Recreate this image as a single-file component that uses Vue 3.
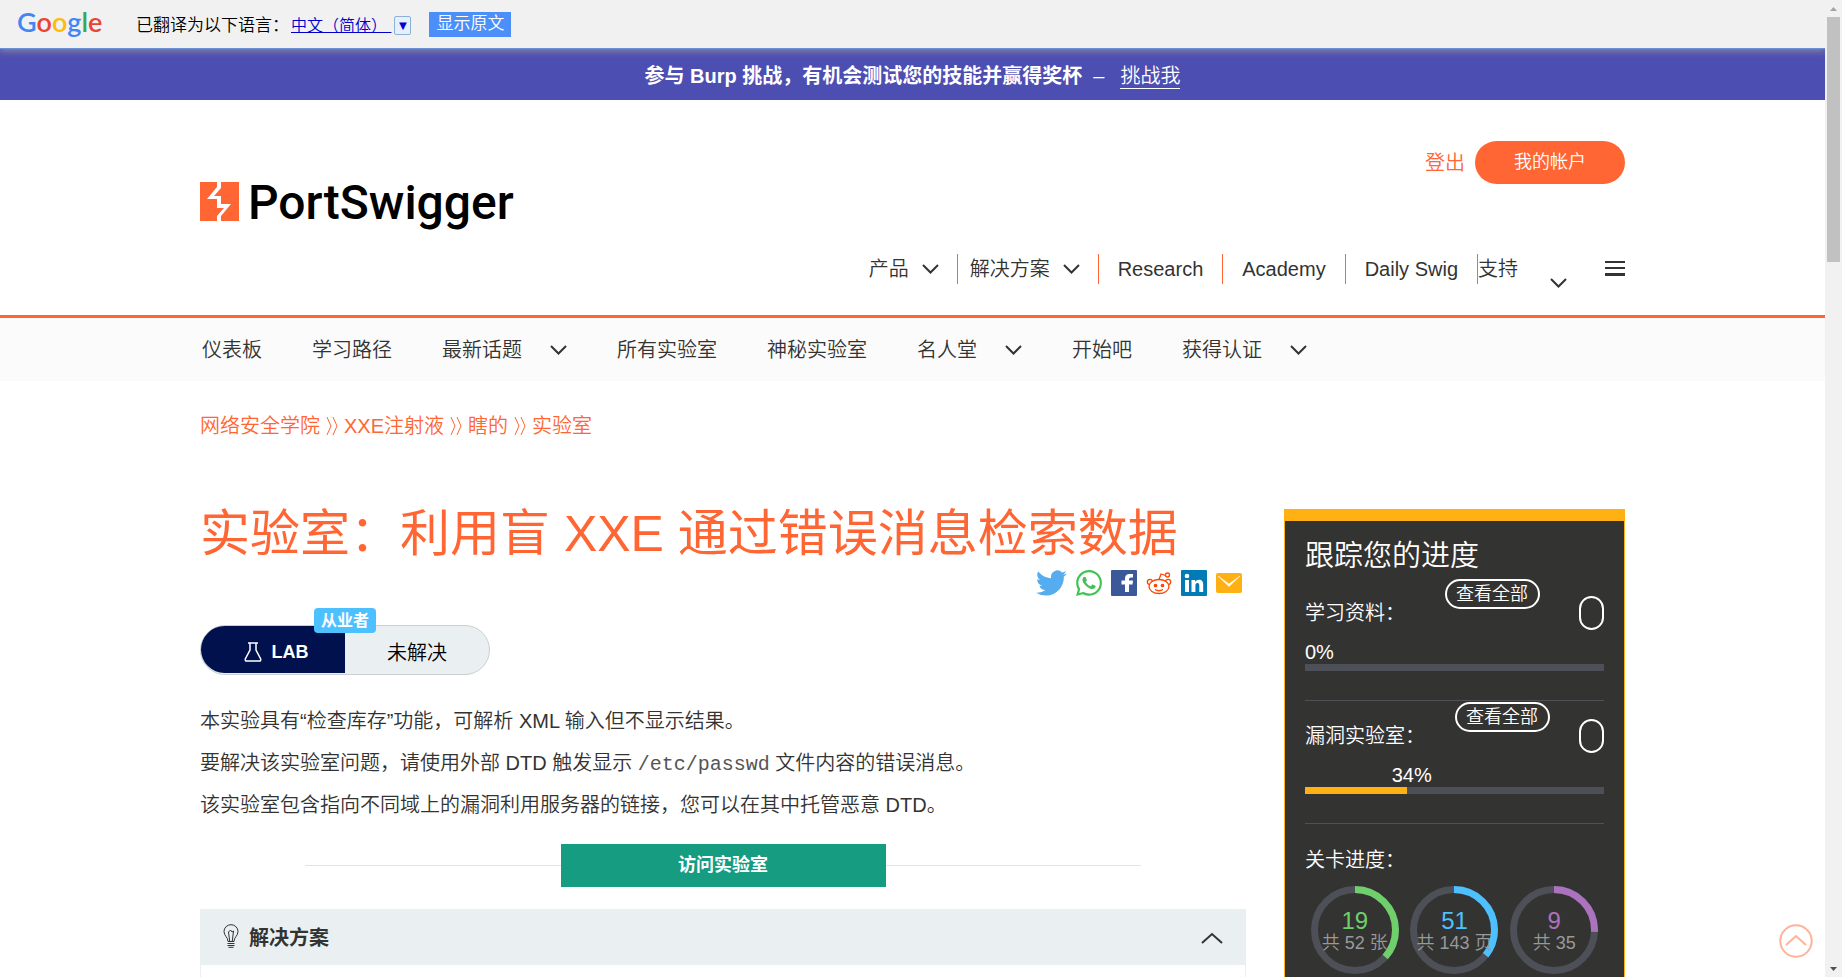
<script setup>
const mainNav = [
  { label: '产品', menu: true },
  { label: '解决方案', menu: true },
  { label: 'Research' },
  { label: 'Academy' },
  { label: 'Daily Swig' }
]

const subNav = [
  { label: '仪表板' },
  { label: '学习路径' },
  { label: '最新话题', menu: true },
  { label: '所有实验室' },
  { label: '神秘实验室' },
  { label: '名人堂', menu: true },
  { label: '开始吧' },
  { label: '获得认证', menu: true }
]

const crumbs = ['网络安全学院', 'XXE注射液', '瞎的', '实验室']

const tracks = [
  { label: '学习资料：', percent: 0 },
  { label: '漏洞实验室：', percent: 34 }
]

const levels = [
  { done: 19, total: 52, note: '共 52 张', tone: 'green' },
  { done: 51, total: 143, note: '共 143 页', tone: 'blue' },
  { done: 9, total: 35, note: '共 35', tone: 'purple' }
]

const circumference = 2 * Math.PI * 40.5
const arc = (level) => `${(level.done / level.total) * circumference} ${circumference}`
</script>

<template>
  <div class="shell">
    <div class="page">
      <div class="translate-bar">
        <span class="google"><span class="g-blue">G</span><span class="g-red">o</span><span class="g-yellow">o</span><span class="g-blue">g</span><span class="g-green">l</span><span class="g-red">e</span></span>
        <span class="translated">已翻译为以下语言：</span>
        <a class="language" href="#"><span class="language-name">中文（简体）&nbsp;</span><span class="language-arrow">▼</span></a>
        <button class="show-original" type="button">显示原文</button>
      </div>

      <div class="banner">
        <strong>参与 Burp 挑战，有机会测试您的技能并赢得奖杯</strong>
        <span class="dash">–</span>
        <a href="#">挑战我</a>
      </div>

      <header class="header">
        <div class="container header-inner">
          <a class="logo" href="#" aria-label="PortSwigger">
            <svg class="logo-mark" viewBox="0 0 39 39">
              <path fill="#ff6633" d="M0 0H17V5L7 17H17V26H24L17 34V39H0Z" />
              <path fill="#ff6633" d="M21 0H39V39H21V34L31 22H21V14H14L21 6Z" />
            </svg>
            <span class="logo-text">PortSwigger</span>
          </a>
          <div class="header-side">
            <div class="account">
              <a class="logout" href="#">登出</a>
              <a class="my-account" href="#">我的帐户</a>
            </div>
            <nav class="main-nav">
              <a v-for="item in mainNav" :key="item.label" class="main-item" :class="{ 'has-menu': item.menu }" href="#">
                <span>{{ item.label }}</span>
                <svg v-if="item.menu" class="chevron" viewBox="0 0 17 10"><path d="M1 1L8.500 8.500L16 1" /></svg>
              </a>
              <a class="main-item support" href="#">支持</a>
              <svg class="chevron low" viewBox="0 0 17 10"><path d="M1 1L8.500 8.500L16 1" /></svg>
              <button class="burger" type="button" aria-label="菜单"><i></i><i></i><i></i></button>
            </nav>
          </div>
        </div>
      </header>

      <nav class="sub-nav">
        <div class="container sub-inner">
          <a v-for="item in subNav" :key="item.label" class="sub-item" href="#">
            <span>{{ item.label }}</span>
            <svg v-if="item.menu" class="chevron" viewBox="0 0 17 10"><path d="M1 1L8.500 8.500L16 1" /></svg>
          </a>
        </div>
      </nav>

      <div class="container">
        <nav class="crumbs">
          <template v-for="(crumb, i) in crumbs" :key="crumb">
            <svg v-if="i" viewBox="0 0 12 20"><path d="M1 1L5 10L1 19M7 1L11 10L7 19" /></svg>
            <a href="#">{{ crumb }}</a>
          </template>
        </nav>

        <div class="columns">
          <main class="lab">
            <h1>实验室：利用盲 XXE 通过错误消息检索数据</h1>

            <div class="social">
              <a class="wide" href="#" aria-label="Twitter">
                <svg viewBox="0 2 24 20"><path fill="#55acee" d="M23.953 4.57a10 10 0 01-2.825.775 4.958 4.958 0 002.163-2.723c-.951.555-2.005.959-3.127 1.184a4.92 4.92 0 00-8.384 4.482C7.69 8.095 4.067 6.13 1.64 3.162a4.822 4.822 0 00-.666 2.475c0 1.71.87 3.213 2.188 4.096a4.904 4.904 0 01-2.228-.616v.06a4.923 4.923 0 003.946 4.827 4.996 4.996 0 01-2.212.085 4.936 4.936 0 004.604 3.417 9.867 9.867 0 01-6.102 2.105c-.39 0-.779-.023-1.17-.067a13.995 13.995 0 007.557 2.209c9.053 0 13.998-7.496 13.998-13.985 0-.21 0-.42-.015-.63A9.935 9.935 0 0024 4.59z" /></svg>
              </a>
              <a href="#" aria-label="WhatsApp">
                <svg viewBox="0 0 24 24"><path fill="#43c353" d="M17.472 14.382c-.297-.149-1.758-.867-2.03-.967-.273-.099-.471-.148-.67.15-.197.297-.767.966-.94 1.164-.173.199-.347.223-.644.075-.297-.15-1.255-.463-2.39-1.475-.883-.788-1.48-1.761-1.653-2.059-.173-.297-.018-.458.13-.606.134-.133.298-.347.446-.52.149-.174.198-.298.298-.497.099-.198.05-.371-.025-.52-.075-.149-.669-1.612-.916-2.207-.242-.579-.487-.5-.669-.51-.173-.008-.371-.01-.57-.01-.198 0-.52.074-.792.372-.272.297-1.04 1.016-1.04 2.479 0 1.462 1.065 2.875 1.213 3.074.149.198 2.096 3.2 5.077 4.487.709.306 1.262.489 1.694.625.712.227 1.36.195 1.871.118.571-.085 1.758-.719 2.006-1.413.248-.694.248-1.289.173-1.413-.074-.124-.272-.198-.57-.347m-5.421 7.403h-.004a9.87 9.87 0 01-5.031-1.378l-.361-.214-3.741.982.998-3.648-.235-.374a9.86 9.86 0 01-1.51-5.26c.001-5.45 4.436-9.884 9.888-9.884 2.64 0 5.122 1.03 6.988 2.898a9.825 9.825 0 012.893 6.994c-.003 5.45-4.437 9.884-9.885 9.884m8.413-18.297A11.815 11.815 0 0012.05 0C5.495 0 .16 5.335.157 11.892c0 2.096.547 4.142 1.588 5.945L.057 24l6.305-1.654a11.882 11.882 0 005.683 1.448h.005c6.554 0 11.89-5.335 11.893-11.893a11.821 11.821 0 00-3.48-8.413z" /></svg>
              </a>
              <a href="#" aria-label="Facebook">
                <svg viewBox="0 0 26 26"><rect width="26" height="26" rx="1" fill="#3b5998" /><path fill="#fff" d="M14 22V14.500H10.500V10.500H14V8.500Q14 4 18.500 4H22V7.500H20Q18 7.500 18 9V10.500H22L21.500 14.500H18V22Z" /></svg>
              </a>
              <a href="#" aria-label="Reddit">
                <svg viewBox="0 0 26 26" fill="none" stroke="#ff4500" stroke-width="1.300">
                  <ellipse cx="13" cy="16.500" rx="10" ry="7" />
                  <path d="M3.500 14.500A2.600 2.600 0 1 1 6.500 11.500M19.500 11.500A2.600 2.600 0 1 1 22.500 14.500M13 9.500L15 4L19.500 5.500" />
                  <circle cx="21.500" cy="5" r="2" />
                  <path d="M9 19.500Q13 22 17 19.500" />
                  <circle cx="9.500" cy="15.500" r="1.200" fill="#ff4500" /><circle cx="16.500" cy="15.500" r="1.200" fill="#ff4500" />
                </svg>
              </a>
              <a href="#" aria-label="LinkedIn">
                <svg viewBox="0 0 26 26"><rect width="26" height="26" rx="1" fill="#007bb6" /><path fill="#fff" d="M4 10H8V22H4ZM10.500 10H14.200V11.700Q15.400 9.700 18 9.700C21.700 9.700 22.200 12.400 22.200 15.300V22H18.300V16C18.300 14.500 18.200 13 16.400 13C14.600 13 14.400 14.500 14.400 16V22H10.500Z" /><circle cx="6" cy="6" r="2.300" fill="#fff" /></svg>
              </a>
              <a href="#" aria-label="Email">
                <svg viewBox="0 0 26 26"><rect y="3" width="26" height="20" rx="2" fill="#ffb012" /><path fill="#fff" d="M2 6L13 14L24 6L13 16.500Z" stroke="#fff" stroke-width=".5" /></svg>
              </a>
            </div>

            <div class="status">
              <span class="status-lab">
                <svg viewBox="0 0 18 20"><path d="M4 1H14M6 1V8L1.300 17Q1 19 2.500 19H15.500Q17 19 16.700 17L12 8V1" /></svg>
                LAB
              </span>
              <span class="status-text">未解决</span>
              <span class="level-tag">从业者</span>
            </div>

            <div class="description">
              <p>本实验具有“检查库存”功能，可解析 XML 输入但不显示结果。</p>
              <p>要解决该实验室问题，请使用外部 DTD 触发显示 <code>/etc/passwd</code> 文件内容的错误消息。</p>
              <p>该实验室包含指向不同域上的漏洞利用服务器的链接，您可以在其中托管恶意 DTD。</p>
            </div>

            <div class="launch">
              <a href="#">访问实验室</a>
            </div>

            <section class="solution">
              <button class="solution-head" type="button">
                <svg class="bulb" viewBox="0 0 16 24">
                  <path d="M5 17.500C5 13 1 12 1 7.500A7 6.800 0 0 1 15 7.500C15 12 11 13 11 17.500ZM6.700 17L5.500 8L7.500 6L9 8L10.500 7L9.300 17M4.500 19.500H11.500M4.500 21.500H11.500M5.500 23.300H10.500" />
                </svg>
                <span>解决方案</span>
                <svg class="fold" viewBox="0 0 22 12"><path d="M1 11L11 2L21 11" /></svg>
              </button>
              <div class="solution-body"></div>
            </section>
          </main>

          <aside class="progress">
            <h2>跟踪您的进度</h2>
            <section v-for="track in tracks" :key="track.label" class="track">
              <div class="track-head">
                <span class="track-label">{{ track.label }}</span>
                <a class="view-all" href="#">查看全部</a>
                <span class="chip"></span>
              </div>
              <div class="percent">
                <span :style="{ marginLeft: `max(0px, calc(${track.percent}% - 15px))` }">{{ track.percent }}%</span>
              </div>
              <div class="bar"><div class="fill" :style="{ width: track.percent + '%' }"></div></div>
            </section>
            <h3>关卡进度：</h3>
            <div class="levels">
              <div v-for="level in levels" :key="level.tone" class="ring" :class="level.tone">
                <svg viewBox="0 0 88 88">
                  <circle class="ring-base" cx="44" cy="44" r="40.500" />
                  <circle class="ring-arc" cx="44" cy="44" r="40.500" :stroke-dasharray="arc(level)" transform="rotate(-90 44 44)" />
                </svg>
                <span class="ring-number">{{ level.done }}</span>
                <span class="ring-note">{{ level.note }}</span>
              </div>
            </div>
          </aside>
        </div>
      </div>

      <a class="to-top" href="#" aria-label="返回顶部">
        <svg viewBox="0 0 34 34"><circle cx="17" cy="17" r="15.700" /><path d="M7 21L17 12L27 21" /></svg>
      </a>
    </div>

    <div class="scrollbar">
      <svg viewBox="0 0 17 17"><path fill="#a3a3a3" d="M5 11L8.500 7L12 11Z" /></svg>
      <div class="track-area"><div class="thumb"></div></div>
      <svg viewBox="0 0 17 17"><path fill="#505050" d="M5 7L8.500 11L12 7Z" /></svg>
    </div>
  </div>
</template>

<style>
body {
  margin: 0;
}
</style>

<style scoped>
.shell {
  display: flex;
  height: 100vh;
  overflow: hidden;
  background: #fff;
  color: #333332;
  font-family: "Liberation Sans", "Noto Sans CJK SC", sans-serif;
  font-size: 20px;
  font-weight: 350;
  line-height: 30px;
}
.shell * {
  box-sizing: border-box;
}
a {
  color: inherit;
  text-decoration: none;
}
button {
  font: inherit;
  color: inherit;
  border: 0;
  padding: 0;
  background: none;
}
h1, h2, h3, p {
  margin: 0;
  font-weight: 350;
}
svg {
  display: block;
  flex: none;
}
.page {
  position: relative;
  flex: 1;
  min-width: 0;
  overflow: hidden;
}
.container {
  max-width: 1425px;
  margin: 0 auto;
}

/* translation bar */
.translate-bar {
  position: relative;
  z-index: 1;
  display: flex;
  align-items: center;
  height: 49px;
  padding-left: 17px;
  background: #f1f1f1;
  border-bottom: 1px solid #6b90da;
  box-shadow: 0 0 8px 1px #999;
  color: #000;
  font-size: 17px;
  line-height: 24px;
}
.google {
  width: 119px;
  padding-bottom: 4px;
  font-family: Lato, sans-serif;
  font-size: 27px;
  font-weight: 600;
}
.g-blue { color: #4285f4; }
.g-red { color: #ea4335; }
.g-yellow { color: #fbbc05; }
.g-green { color: #34a853; }
.translated {
  width: 155px;
  padding-top: 3px;
}
.language {
  display: flex;
  align-items: center;
  gap: 3px;
  padding-top: 3px;
  color: #00c;
  font-size: 16px;
}
.language-name {
  text-decoration: underline;
}
.language-arrow {
  width: 17px;
  height: 19px;
  border: 1px solid #8db2da;
  border-radius: 2px;
  background: #e5f0fc;
  font-size: 13px;
  line-height: 17px;
  text-align: center;
}
.show-original {
  height: 25px;
  margin-left: 18px;
  padding: 0 7px;
  background: #4d8ff8;
  color: #fff;
}

/* banner */
.banner {
  display: flex;
  align-items: center;
  justify-content: center;
  height: 51px;
  padding-top: 3px;
  background: #4d4eb2;
  color: #fff;
}
.banner strong {
  font-weight: 700;
}
.dash {
  margin: 0 16px 0 11px;
}
.banner a {
  line-height: 24px;
  border-bottom: 1px solid #fff;
}

/* header */
.header {
  border-bottom: 3px solid #ff6633;
}
.header-inner {
  display: flex;
  justify-content: space-between;
  padding: 41px 0 27px;
}
.logo {
  display: flex;
  align-items: center;
  gap: 9px;
  height: 39px;
  margin-top: 41px;
  color: #000;
}
.logo-mark {
  width: 39px;
  height: 39px;
}
.logo-text {
  padding-top: 2px;
  font-family: Roboto, sans-serif;
  font-size: 48px;
  font-weight: 500;
  line-height: 40px;
}
.header-side {
  display: flex;
  flex-direction: column;
  gap: 70px;
}
.account {
  display: flex;
  align-items: center;
  justify-content: flex-end;
  gap: 10px;
}
.logout {
  color: #ff6633;
}
.my-account {
  width: 150px;
  height: 43px;
  border-radius: 22px;
  background: #ff6633;
  color: #fff;
  font-size: 18px;
  line-height: 43px;
  text-align: center;
}
.main-nav {
  display: flex;
  align-items: flex-start;
  height: 34px;
}
.main-item {
  display: flex;
  align-items: center;
  gap: 13px;
  height: 30px;
  padding: 0 19px;
  border-left: 1px solid #ff6633;
}
.main-item.has-menu {
  padding: 0 18px 0 12px;
}
.main-item.has-menu:first-child {
  border-left: 0;
  padding-left: 0;
}
.main-item.support {
  padding: 0 32px 0 0;
}
.chevron {
  width: 17px;
  height: 10px;
  fill: none;
  stroke: #333332;
  stroke-width: 2;
}
.chevron.low {
  align-self: flex-end;
}
.burger {
  display: grid;
  gap: 4px;
  width: 20px;
  margin: 7px 0 0 38px;
}
.burger i {
  height: 2px;
  background: #333332;
}
.burger i:last-child {
  height: 3px;
}

/* secondary navigation */
.sub-nav {
  background: #fbfbfb;
}
.sub-inner {
  display: flex;
  align-items: center;
  gap: 50px;
  height: 63px;
  padding-left: 2px;
}
.sub-item {
  display: flex;
  align-items: center;
  gap: 28px;
}

.crumbs {
  display: flex;
  align-items: center;
  gap: 6px;
  margin: 30px 0 63px;
  color: #ff6633;
}
.crumbs svg {
  width: 12px;
  height: 20px;
  fill: none;
  stroke: #ff6633;
}

.columns {
  display: grid;
  grid-template-columns: minmax(0, 1fr) 341px;
  gap: 38px;
}

/* lab */
h1 {
  color: #ff6633;
  font-size: 50px;
  font-weight: 400;
  line-height: 60px;
}
.social {
  display: flex;
  justify-content: flex-end;
  gap: 9px;
  margin-top: 6px;
  padding-right: 4px;
}
.social a {
  width: 26px;
}
.social a.wide {
  width: 31px;
}
.social svg {
  width: 100%;
  height: 26px;
}
.status {
  position: relative;
  display: flex;
  width: 290px;
  height: 50px;
  margin-top: 29px;
  padding-bottom: 1px;
  border: 1px solid #c9cfd2;
  border-radius: 25px;
  background: #eaeff2;
  color: #000;
}
.status-lab {
  display: flex;
  align-items: center;
  justify-content: center;
  gap: 10px;
  width: 50%;
  padding-left: 6px;
  padding-top: 4px;
  border-radius: 24px 0 0 24px;
  background: #00114d;
  color: #fff;
  font-size: 18px;
  font-weight: 700;
}
.status-lab svg {
  width: 18px;
  height: 20px;
  fill: none;
  stroke: #fff;
  stroke-width: 1.500;
}
.status-text {
  width: 50%;
  padding-top: 4px;
  line-height: 46px;
  text-align: center;
}
.level-tag {
  position: absolute;
  top: -18px;
  left: 113px;
  width: 62px;
  height: 25px;
  border-radius: 4px;
  background: #4dc0ff;
  color: #fff;
  font-size: 16px;
  font-weight: 700;
  line-height: 26px;
  text-align: center;
}
.description {
  margin-top: 25px;
  line-height: 42px;
}
.description p {
  height: 42px;
}
code {
  font-family: "Liberation Mono", monospace;
  font-size: 20px;
  color: #555;
}
.launch {
  display: flex;
  align-items: center;
  margin: 18px 105px 22px;
}
.launch::before,
.launch::after {
  content: "";
  flex: 1;
  height: 1px;
  background: #e4e4e4;
}
.launch a {
  width: 325px;
  height: 43px;
  background: #169c80;
  color: #fff;
  font-size: 18px;
  font-weight: 700;
  line-height: 43px;
  text-align: center;
}
.solution {
  border: 1px solid #eaeff2;
}
.solution-head {
  display: flex;
  align-items: center;
  width: 100%;
  height: 55px;
  padding: 0 22px;
  background: #eaeff2;
  font-weight: 700;
}
.bulb {
  width: 16px;
  height: 24px;
  margin: 0 10px 4px 0;
  fill: none;
  stroke: #333332;
}
.fold {
  width: 22px;
  height: 12px;
  margin-left: auto;
  fill: none;
  stroke: #333332;
  stroke-width: 2;
}
.solution-body {
  height: 200px;
}

/* progress */
.progress {
  margin-top: 5px;
  padding: 15px 20px 60px;
  border: 1px solid #ffb012;
  border-top-width: 12px;
  background: #333332;
  color: #fff;
}
h2 {
  margin-bottom: 2px;
  font-size: 29px;
  line-height: 40px;
}
.track {
  height: 123px;
  padding-top: 1px;
  border-bottom: 1px solid #4f5157;
}
.track-head {
  display: flex;
  align-items: flex-start;
  justify-content: space-between;
  height: 61px;
}
.track-label {
  margin-top: 19px;
}
.view-all {
  width: 95px;
  height: 30px;
  border: 2px solid #fff;
  border-radius: 15px;
  font-size: 18px;
  line-height: 27px;
  text-align: center;
}
.chip {
  width: 25px;
  height: 34px;
  margin-top: 17px;
  border: 2px solid #fff;
  border-radius: 13px;
}
.percent {
  line-height: 24px;
}
.percent span {
  display: block;
}
.bar {
  height: 7px;
  background: #4d5057;
}
.fill {
  height: 100%;
  background: #ffb012;
}
h3 {
  margin: 21px 0 11px;
  font-size: 20px;
}
.levels {
  display: grid;
  grid-template-columns: repeat(3, 1fr);
  justify-items: center;
}
.ring {
  display: grid;
  place-items: center;
  grid-template-rows: 23px 24px 20px;
  width: 88px;
  height: 88px;
}
.ring svg {
  grid-area: 1 / 1 / 4 / 2;
  align-self: start;
  width: 88px;
  height: 88px;
}
.ring circle {
  fill: none;
  stroke-width: 7;
}
.ring-base {
  stroke: #4d5057;
}
.ring-arc {
  stroke: currentColor;
}
.green { color: #6fcf6b; }
.blue { color: #4dc0ff; }
.purple { color: #ab72c0; }
.ring-number {
  grid-area: 2 / 1;
  font-size: 24px;
  line-height: 24px;
}
.ring-note {
  grid-area: 3 / 1;
  color: #999;
  font-size: 18px;
  line-height: 20px;
}

.to-top {
  position: absolute;
  right: 12px;
  bottom: 19px;
}
.to-top svg {
  width: 34px;
  height: 34px;
  fill: none;
  stroke: #ffb299;
  stroke-width: 2;
}

/* scrollbar */
.scrollbar {
  display: flex;
  flex-direction: column;
  width: 17px;
  background: #f1f1f1;
}
.scrollbar svg {
  width: 17px;
  height: 17px;
}
.track-area {
  flex: 1;
  padding: 0 2px;
}
.thumb {
  height: 26%;
  background: #c1c1c1;
}
</style>
